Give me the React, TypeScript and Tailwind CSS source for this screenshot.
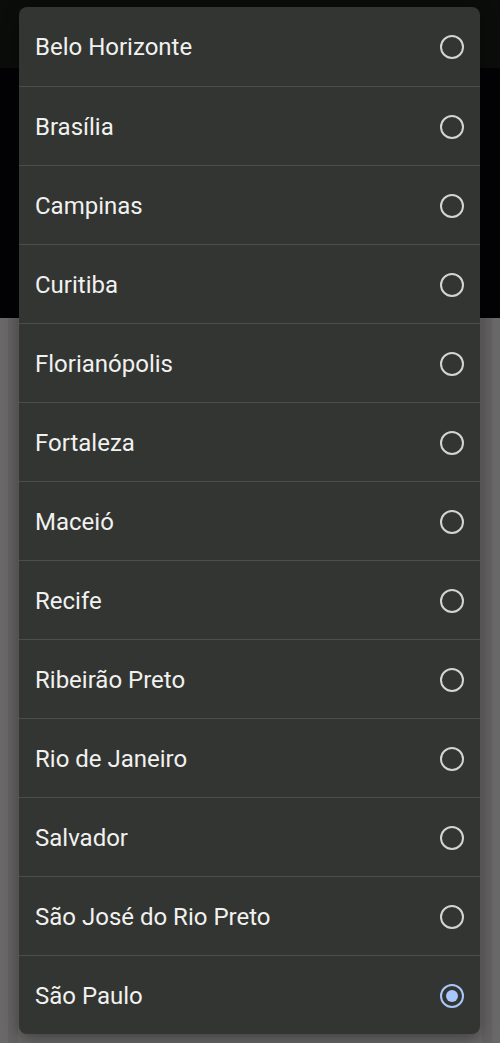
const cities = [
  "Belo Horizonte",
  "Brasília",
  "Campinas",
  "Curitiba",
  "Florianópolis",
  "Fortaleza",
  "Maceió",
  "Recife",
  "Ribeirão Preto",
  "Rio de Janeiro",
  "Salvador",
  "São José do Rio Preto",
  "São Paulo",
];

const selected = "São Paulo";

function Radio({ checked }: { checked: boolean }) {
  if (checked) {
    return (
      <span className="flex h-[24px] w-[24px] items-center justify-center rounded-full border-[2.5px] border-[#a8c7fa]">
        <span className="h-[12px] w-[12px] rounded-full bg-[#a8c7fa]" />
      </span>
    );
  }
  return <span className="block h-[24px] w-[24px] rounded-full border-[2.5px] border-[#d4d5d2]" />;
}

export default function App() {
  return (
    <div className="relative h-[1043px] w-[500px] overflow-hidden bg-[#6a6869] font-['Roboto',sans-serif]">
      {/* dimmed app behind the dialog */}
      <div className="h-[68px] bg-[#0b0d0b]" />
      <div className="h-[250px] bg-[#030306]" />
      <div className="flex h-[725px] px-[8px]">
        <div className="w-[10px] bg-[#646263]" />
        <div className="flex-1" />
        <div className="w-[10px] bg-[#646263]" />
      </div>

      <div className="absolute left-[19px] top-[7px] w-[461px] overflow-hidden rounded-[8px] bg-[#323532] shadow-[0_4px_16px_rgba(0,0,0,0.4)]">
        {cities.map((city, i) => (
          <div
            key={city}
            className={`flex h-[79px] items-center justify-between pl-[16px] pr-[16px] pt-[1px] ${i > 0 ? "border-t border-[#4b4e4b]" : ""}`}
          >
            <span className="text-[24px] leading-none text-[#f1f1ef]">{city}</span>
            <Radio checked={city === selected} />
          </div>
        ))}
      </div>
    </div>
  );
}
